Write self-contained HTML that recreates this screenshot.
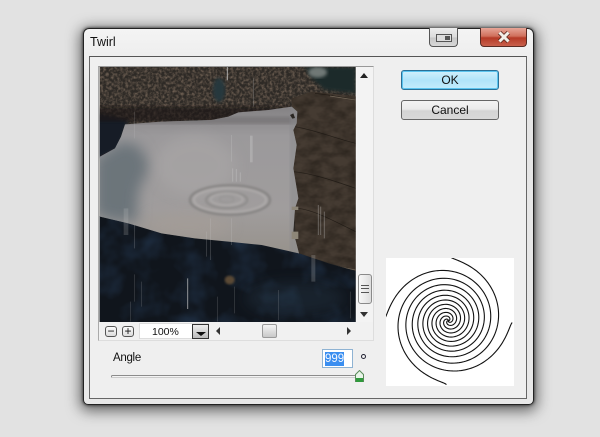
<!DOCTYPE html>
<html><head><meta charset="utf-8"><style>
html,body{margin:0;padding:0}
body{width:600px;height:437px;background:#e2e2e2;overflow:hidden;position:relative;font-family:"Liberation Sans",sans-serif;font-size:12px;color:#111}
div{position:absolute;box-sizing:border-box}
.win{left:83px;top:28px;width:451px;height:377px;background:linear-gradient(#f4f4f4,#e6e6e6 60px,#e8e8e8);border:1px solid #222;border-radius:6px 6px 5px 5px;box-shadow:0 0 3px #222,0 3px 14px 3px rgba(0,0,0,.55)}
.panel{left:89px;top:56px;width:438px;height:343px;background:#efefef;border:1px solid #666;border-top-color:#555}
.btn{text-align:center;border-radius:3px}
.sb{background:#f3f3f3}
.arrow{width:0;height:0}
</style></head><body>
<div class="win"></div>
<div style="left:90px;top:35px;font-size:12.5px">Twirl</div>
<div style="left:429px;top:28px;width:29px;height:19px;background:linear-gradient(#ececec,#dcdcdc 50%,#c8c8c8 55%,#d8d8d8);border:1px solid #555;border-top:none;border-radius:0 0 4px 4px"></div>
<div style="left:436px;top:34px;width:16px;height:8px;background:#ddd;border:1px solid #555"></div>
<div style="left:445px;top:36px;width:5px;height:4px;background:#555"></div>
<div style="left:480px;top:28px;width:47px;height:19px;background:linear-gradient(#e6a597,#d0705c 45%,#b53a26 55%,#c9604c);border:1px solid #5a2a22;border-top:none;border-radius:0 0 4px 4px"></div>
<svg style="position:absolute;left:497px;top:31px" width="14" height="12"><path d="M2.500 1.500 L11.500 10.500 M11.500 1.500 L2.500 10.500" stroke="#5a2a20" stroke-width="4.500"/><path d="M2.500 1.500 L11.500 10.500 M11.500 1.500 L2.500 10.500" stroke="#f2efe8" stroke-width="3"/></svg>
<div class="panel"></div>
<div style="left:98px;top:66px;width:276px;height:275px;background:#f6f6f6;border:1px solid #ddd;border-top:1px solid #999;border-left:1px solid #aaa"></div>

<svg style="position:absolute;left:95px;top:65px" width="280" height="260" viewBox="0 0 840 780">
<defs>
<filter id="nb" x="0" y="0" width="100%" height="100%" color-interpolation-filters="sRGB"><feTurbulence type="fractalNoise" baseFrequency="0.12" numOctaves="3" seed="4"/><feColorMatrix values="0 0 0 0 .5  0 0 0 0 .43  0 0 0 0 .37  1.700 0 0 0 -.65"/></filter>
<filter id="nr" x="0" y="0" width="100%" height="100%" color-interpolation-filters="sRGB"><feTurbulence type="fractalNoise" baseFrequency="0.025 0.04" numOctaves="3" seed="9"/><feColorMatrix values="0 0 0 0 .1  0 0 0 0 .08  0 0 0 0 .06  1 0 0 0 -.3"/></filter>
<filter id="nd" x="0" y="0" width="100%" height="100%" color-interpolation-filters="sRGB"><feTurbulence type="fractalNoise" baseFrequency="0.012" numOctaves="3" seed="12"/><feColorMatrix values="0 0 0 0 .14  0 0 0 0 .22  0 0 0 0 .32  1.400 0 0 0 -.58"/></filter>
<filter id="b2"><feGaussianBlur stdDeviation="3"/></filter>
<filter id="b4"><feGaussianBlur stdDeviation="5"/></filter>
<filter id="b20" x="-50%" y="-50%" width="200%" height="200%"><feGaussianBlur stdDeviation="20"/></filter>
<linearGradient id="sky" x1="0" y1="0" x2="0" y2="1"><stop offset="0" stop-color="#848284"/><stop offset=".2" stop-color="#9b999b"/><stop offset=".7" stop-color="#a09d9d"/><stop offset="1" stop-color="#97928c"/></linearGradient>
<clipPath id="cl"><rect x="14" y="6" width="768" height="766"/></clipPath>
<clipPath id="skyc"><path d="M15 275L60 250 78 215 90 178 200 170 350 165 400 155 430 142 520 135 590 125 607 140 605 175 595 195 605 240 595 310 610 400 600 430 595 500 612 565 500 540 400 530 300 520 200 505 100 475 15 455Z"/></clipPath>
<clipPath id="rockc"><path d="M590 100L650 80 790 95 790 620 690 590 605 565 590 300Z"/></clipPath>
<clipPath id="botc"><path d="M0 450L100 472 200 503 300 518 400 528 500 538 612 565 700 595 790 620 790 790 0 790Z"/></clipPath>
</defs>
<g clip-path="url(#cl)">
<rect width="840" height="780" fill="#2e2a26"/>
<rect width="840" height="200" filter="url(#nb)"/>
<path d="M0 145L60 155 100 165 70 250 0 285Z" fill="#171d26" filter="url(#b4)"/>
<ellipse cx="372" cy="75" rx="18" ry="36" fill="#25373c" filter="url(#b4)"/>
<rect y="125" width="600" height="45" fill="#1a1816" opacity=".65" filter="url(#b4)"/>
<g clip-path="url(#rockc)">
<rect x="580" y="70" width="220" height="560" fill="#453b32"/>
<rect x="580" y="70" width="220" height="560" filter="url(#nr)"/>
</g>
<path d="M600 185C660 195 720 220 782 235M595 320C650 325 710 345 782 370M600 430C650 430 720 470 782 500M660 85C700 90 740 95 782 105" fill="none" stroke="#17120e" stroke-width="2" opacity=".7"/>
<path d="M610 570C670 590 720 605 782 615M705 93L782 105" fill="none" stroke="#8a7d6c" stroke-width="2" opacity=".7"/>
<path d="M630 6L782 6 782 85 690 75 650 40Z" fill="#1f2a2b" filter="url(#b4)"/>
<ellipse cx="668" cy="22" rx="28" ry="16" fill="#6f7876" filter="url(#b4)"/>
<g clip-path="url(#botc)">
<rect y="440" width="800" height="340" fill="#10151c"/>
<rect y="440" width="800" height="340" filter="url(#nd)"/>
<ellipse cx="600" cy="700" rx="150" ry="50" fill="#2a3c50" opacity=".35" filter="url(#b20)"/>
</g>
<ellipse cx="404" cy="645" rx="15" ry="13" fill="#5a4a34" filter="url(#b2)"/>
<path d="M15 275L60 250 78 215 90 178 200 170 350 165 400 155 430 142 520 135 590 125 607 140 605 175 595 195 605 240 595 310 610 400 600 430 595 500 612 565 500 540 400 530 300 520 200 505 100 475 15 455Z" fill="url(#sky)"/>
<g clip-path="url(#skyc)">
<path d="M0 280L80 230 130 240 165 300 130 380 125 470 60 470 0 450Z" fill="#6c747a" filter="url(#b20)"/>
<rect y="155" width="620" height="22" fill="#6f6d6e" opacity=".6" filter="url(#b4)"/>
<ellipse cx="300" cy="300" rx="120" ry="90" fill="#aaa7a7" opacity=".6" filter="url(#b20)"/>
<ellipse cx="280" cy="480" rx="130" ry="40" fill="#a69e98" opacity=".6" filter="url(#b20)"/>
<rect x="585" y="120" width="30" height="460" fill="#8a898c" opacity=".5" filter="url(#b4)"/>
</g>
<path d="M585 150l10 -5 5 14 -8 2Z" fill="#2a2622"/>
<path d="M590 425h20v10h-20ZM590 500h20v22h-20Z" fill="#8d8678"/>
<g fill="none" filter="url(#b2)">
<ellipse cx="405" cy="405" rx="120" ry="44" stroke="#858382" stroke-width="7"/>
<ellipse cx="405" cy="405" rx="108" ry="36" stroke="#b2afae" stroke-width="5"/>
<ellipse cx="395" cy="405" rx="62" ry="24" stroke="#8d8b8a" stroke-width="6"/>
<ellipse cx="395" cy="403" rx="48" ry="18" stroke="#aeabaa" stroke-width="5"/>
<ellipse cx="395" cy="403" rx="22" ry="10" stroke="#979594" stroke-width="4"/>
</g>
<g stroke="#c8c8c8" fill="none">
<path d="M397 6V46" stroke-width="3" opacity=".8"/>
<path d="M475 40V125" stroke-width="2" opacity=".35"/>
<path d="M118 140V220" stroke-width="2" opacity=".25"/>
<path d="M409 210V290" stroke-width="2" opacity=".4"/>
<path d="M469 212V292" stroke-width="8" opacity=".4"/>
<path d="M413 310V350M424 312V350M436 322V350" stroke-width="3" opacity=".4"/>
<path d="M93 430V510" stroke-width="14" opacity=".2"/>
<path d="M118 480V550M346 460V585M334 500V575M409 460V540" stroke-width="2" opacity=".3"/>
<path d="M670 420V510M677 425V510M688 440V520" stroke-width="3" opacity=".35"/>
<path d="M655 570V650" stroke-width="12" opacity=".22"/>
<path d="M278 640V732" stroke-width="3" opacity=".7"/>
<path d="M118 628V710M139 650V725M418 665V745M367 695V770M550 675V765M106 710V770M766 680V760" stroke-width="2" opacity=".25"/>
</g>
</g>
</svg>

<div class="sb" style="left:357px;top:67px;width:16px;height:255px"></div>
<div class="arrow" style="left:360px;top:73px;border:4px solid transparent;border-top:none;border-bottom:5px solid #222"></div>
<div class="arrow" style="left:360px;top:312px;border:4px solid transparent;border-bottom:none;border-top:5px solid #333"></div>
<div style="left:358px;top:274px;width:14px;height:30px;background:linear-gradient(90deg,#f8f8f8,#ddd);border:1px solid #8a8a8a;border-radius:3px"></div>
<div style="left:361px;top:285px;width:8px;height:8px;border-top:1px solid #555;border-bottom:1px solid #555"></div>
<div style="left:361px;top:288px;width:8px;height:2px;border-top:1px solid #555"></div>

<div style="left:99px;top:322px;width:274px;height:18px;background:#f1f1f1"></div>
<div class="btn" style="left:105px;top:326px;width:12px;height:11px;background:linear-gradient(#fbfbfb,#dcdcdc);border:1px solid #555;line-height:8px;font-size:12px">&minus;</div>
<div class="btn" style="left:122px;top:326px;width:12px;height:11px;background:linear-gradient(#fbfbfb,#dcdcdc);border:1px solid #555;line-height:8px;font-size:12px">+</div>
<div style="left:139px;top:323px;width:70px;height:16px;background:#fff;border:1px solid #ddd;font-size:10.5px;line-height:16px;padding-left:12px">100%</div>
<div style="left:192px;top:324px;width:17px;height:15px;background:linear-gradient(#eee,#bbb);border:1px solid #333"></div>
<div class="arrow" style="left:196px;top:332px;border:5px solid transparent;border-bottom:none;border-top:4px solid #111"></div>
<div class="arrow" style="left:216px;top:327px;border:4px solid transparent;border-left:none;border-right:4px solid #333"></div>
<div class="arrow" style="left:347px;top:327px;border:4px solid transparent;border-right:none;border-left:4px solid #333"></div>
<div style="left:262px;top:324px;width:15px;height:14px;background:linear-gradient(#f4f4f4,#c8c8c8);border:1px solid #9a9a9a;border-radius:2px"></div>

<div class="btn" style="left:401px;top:70px;width:98px;height:20px;background:linear-gradient(#d0f0fc,#b0e4fa 50%,#c4ecfc);border:1px solid #2a6f96;box-shadow:inset 0 0 0 1px #5cc4ef;line-height:18px;font-size:12px">OK</div>
<div class="btn" style="left:401px;top:100px;width:98px;height:20px;background:linear-gradient(#f4f4f4,#ebebeb 45%,#d4d4d4 55%,#d8d8d8);border:1px solid #666;line-height:18px;font-size:12px">Cancel</div>

<svg style="position:absolute;left:386px;top:258px;background:#fff" width="128" height="128" viewBox="0 0 128 128"><path id="spiral" fill="none" stroke="#111" stroke-width="1.100"/></svg>
<script>
(function(){var d='',cx=62.3,cy=62.7,R=64,A=1000*Math.PI/180;
for(var k=0;k<4;k++){var t0=-Math.PI/2+k*Math.PI/2+0.03;
for(var i=0;i<=260;i++){var r=R*(1-i/260),u=1-r/R,t=t0+A*Math.pow(u,1.6);
d+=(i?'L':'M')+(cx+r*Math.cos(t)).toFixed(2)+' '+(cy+r*Math.sin(t)).toFixed(2);}}
document.getElementById('spiral').setAttribute('d',d);})();
</script>

<div style="left:113px;top:352px;font-size:11.5px;letter-spacing:-.3px">Angle</div>
<div style="left:322px;top:349px;width:31px;height:19px;background:#fff;border:1px solid #8fb3d3"></div>
<div style="left:325px;top:352px;width:19px;height:14px;background:#3a8ef0;color:#f4f8ff;font-size:11.5px;line-height:14px;text-align:center">999</div>
<div style="left:361px;top:354px;width:5px;height:5px;border:1px solid #223;border-radius:50%"></div>
<div style="left:111px;top:375px;width:250px;height:3px;background:#f4f4f4;border:1px solid #8c8c8c;border-radius:2px;border-bottom-color:#ccc"></div>
<svg style="position:absolute;left:355px;top:370px" width="10" height="13"><path d="M4.500 .5L8.500 4.500V11.500H.5V4.500Z" fill="#e8f4e8" stroke="#5a8a5a"/><rect x="1" y="8" width="7" height="4" fill="#2f9a3c"/></svg>
</body></html>
